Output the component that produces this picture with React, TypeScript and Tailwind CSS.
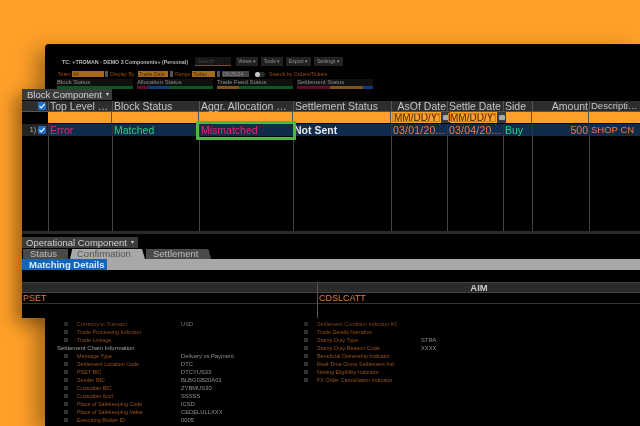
const font = { fontFamily: '"Liberation Sans", Arial, sans-serif' };

type Col = { w: string; label: string; right?: boolean };
const cols: Col[] = [
  { w: "w-[64px]", label: "Top Level …" },
  { w: "w-[87px]", label: "Block Status" },
  { w: "w-[94px]", label: "Aggr. Allocation …" },
  { w: "w-[98px]", label: "Settlement Status" },
  { w: "w-[56px]", label: "AsOf Date", right: true },
  { w: "w-[56px]", label: "Settle Date" },
  { w: "w-[29px]", label: "Side" },
  { w: "w-[57px]", label: "Amount", right: true },
  { w: "flex-1 text-[9.5px]", label: "Descripti…" },
];

function Check() {
  return (
    <span className="flex h-[8px] w-[8px] shrink-0 items-center justify-center rounded-[1px] bg-[#1a6fd0]">
      <svg viewBox="0 0 8 8" className="h-[8px] w-[8px]">
        <path d="M1.5 4 L3.3 5.8 L6.6 2" stroke="#e8f2ff" strokeWidth="1.2" fill="none" />
      </svg>
    </span>
  );
}

function DateInput() {
  return (
    <div className="flex h-full flex-1 items-stretch">
      <div className="m-[1px] flex-1 overflow-hidden whitespace-nowrap border border-[#c9801f] pl-[1px] text-[10px] leading-[8px] text-[#3f2003]">MM/DD/Y'</div>
      <div className="flex w-[9px] shrink-0 items-center justify-center bg-[#3a3a3a]">
        <span className="h-[5px] w-[6px] rounded-[1px] bg-[#a9a9a9]" />
      </div>
    </div>
  );
}

function Detail({ label, value }: { label: string; value?: string }) {
  return (
    <div className="flex h-[8px] items-center pl-[19px] leading-[8px]">
      <span className="h-[4px] w-[4px] shrink-0 bg-[#333]" />
      <span className="ml-[9px] w-[104px] shrink-0 whitespace-nowrap text-[5.4px] text-[#9a5018]">{label}</span>
      <span className="whitespace-nowrap text-[5.8px] text-[#909090]">{value}</span>
    </div>
  );
}

function Status({ label, bars }: { label: string; bars: string[] }) {
  return (
    <div className="w-[76px] shrink-0">
      <div className="h-[7px] whitespace-nowrap bg-[#111] leading-[7px] text-[#8f8f8f]">{label}</div>
      <div className="flex h-[3px]">
        {bars.map((b) => (
          <div key={b} className={b} />
        ))}
      </div>
    </div>
  );
}

function Menu({ label, w }: { label: string; w: string }) {
  return (
    <span className={`flex h-[9px] items-center justify-center whitespace-nowrap bg-[#222] leading-[9px] text-[#8e8e8e] ${w}`}>{label} ▾</span>
  );
}

export default function App() {
  return (
    <div className="relative h-[426px] w-[640px] overflow-hidden bg-[#ffa028] blur-[0.45px]" style={font}>
      {/* background window */}
      <div className="absolute left-[45px] top-[44px] flex h-[382px] w-[595px] flex-col rounded-tl-[4px] bg-black text-[6px] shadow-[-10px_6px_20px_rgba(0,0,0,0.32)]">
        <div className="flex h-[22px] shrink-0 items-end pl-[17px]">
          <span className="w-[128px] shrink-0 whitespace-nowrap text-[5.3px] font-bold leading-[8px] text-[#b8b8b8]">TC: +TROMAN - DEMO 3 Components+ (Personal)</span>
          <span className="ml-[5px] h-[9px] w-[36px] border-b border-[#8a4a14] bg-[#161616] pl-[3px] text-[5.2px] leading-[8px] text-[#444]">Search</span>
          <div className="ml-[5px] flex gap-[3px] text-[5.2px]">
            <Menu label="Views" w="w-[22px]" />
            <Menu label="Tools" w="w-[22px]" />
            <Menu label="Export" w="w-[25px]" />
            <Menu label="Settings" w="w-[29px]" />
          </div>
        </div>
        <div className="mt-[4px] flex h-[8px] shrink-0 items-center pl-[13px] text-[5.2px] leading-[8px] text-[#9a4a12]">
          <span className="w-[14px]">Team</span>
          <span className="h-[6px] w-[32px] bg-[#a66a1c] pl-[1px] leading-[6px] text-[#4a2a05]">All</span>
          <span className="ml-[1px] h-[6px] w-[3px] bg-[#555]" />
          <span className="ml-[2px] w-[28px] whitespace-nowrap">Display By</span>
          <span className="h-[6px] w-[30px] whitespace-nowrap bg-[#a66a1c] pl-[1px] leading-[6px] text-[#4a2a05]">Trade Date</span>
          <span className="ml-[2px] h-[6px] w-[3px] bg-[#555]" />
          <span className="ml-[2px] w-[17px]">Range</span>
          <span className="h-[6px] w-[23px] bg-[#a66a1c] pl-[1px] leading-[6px] text-[#4a2a05]">Today</span>
          <span className="ml-[2px] h-[6px] w-[3px] bg-[#555]" />
          <span className="ml-[2px] h-[6px] w-[27px] bg-[#444] pl-[1px] leading-[6px] text-[#999]">06/25/24</span>
          <span className="ml-[6px] h-[5px] w-[10px] rounded-full bg-[#2b2b2b]">
            <span className="block h-[5px] w-[5px] rounded-full bg-[#c8c8c8]" />
          </span>
          <span className="ml-[4px] whitespace-nowrap">Search by Orders/Tickets</span>
        </div>
        <div className="mt-[1px] flex shrink-0 gap-[4px] pl-[12px]">
          <Status label="Block Status" bars={["h-full w-full bg-[#0e5c22]"]} />
          <Status label="Allocation Status" bars={["h-full w-[11px] bg-[#6a0f2a]", "h-full w-[21px] bg-[#0d3f8a]", "h-full flex-1 bg-[#0e5c22]"]} />
          <Status label="Trade Feed Status" bars={["h-full w-[22px] bg-[#8a5a1c]", "h-full flex-1 bg-[#0e5c22]"]} />
          <Status label="Settlement Status" bars={["h-full w-[33px] bg-[#6a0f2a]", "h-full w-[33px] bg-[#8a5a1c]", "h-full flex-1 bg-[#0d3f8a]"]} />
        </div>

        {/* details visible beneath the foreground panel */}
        <div className="mt-[231px] grid grid-cols-[240px_1fr]">
          <div>
            <Detail label="Currency to Transact" value="USD" />
            <Detail label="Trade Processing Indicator" />
            <Detail label="Trade Linkage" />
            <div className="h-[8px] whitespace-nowrap pl-[12px] leading-[8px] text-[#a0a0a0]">Settlement Chain Information</div>
            <Detail label="Message Type" value="Delivery vs Payment" />
            <Detail label="Settlement Location Code" value="DTC" />
            <Detail label="PSET BIC" value="DTCYUS33" />
            <Detail label="Sender BIC" value="BLBGGB20A01" />
            <Detail label="Custodian BIC" value="ZYBMUS30" />
            <Detail label="Custodian Acct" value="SSSSS" />
            <Detail label="Place of Safekeeping Code" value="ICSD" />
            <Detail label="Place of Safekeeping Value" value="CEDELULLXXX" />
            <Detail label="Executing Broker ID" value="0005" />
          </div>
          <div>
            <Detail label="Settlement Condition Indicator #3" />
            <Detail label="Trade Details Narrative" />
            <Detail label="Stamp Duty Type" value="STRA" />
            <Detail label="Stamp Duty Reason Code" value="XXXX" />
            <Detail label="Beneficial Ownership Indicator" />
            <Detail label="Real-Time Gross Settlement Ind." />
            <Detail label="Netting Eligibility Indicator" />
            <Detail label="FX Order Cancellation Indicator" />
          </div>
        </div>
      </div>

      {/* foreground window */}
      <div className="absolute left-[22px] top-[89px] flex h-[229px] w-[618px] flex-col bg-black text-[10.5px] shadow-[-8px_6px_16px_rgba(0,0,0,0.35)]">
        <div className="flex h-[11px] shrink-0">
          <span className="flex w-[90px] items-center gap-[4px] whitespace-nowrap bg-[#3c3c3c] pl-[5px] text-[9.5px] leading-[11px] text-[#d0d0d0]">
            Block Component <span className="text-[6px]">▾</span>
          </span>
        </div>
        <div className="mt-[1px] flex h-[11px] shrink-0 border-b border-[#555] bg-[#2d2d2d] leading-[10px] text-[#c4c4c4]">
          <div className="flex w-[26px] shrink-0 items-center justify-end pr-[2px]"><Check /></div>
          {cols.map((c) => (
            <div key={c.label} className={`${c.w} shrink-0 whitespace-nowrap border-l border-[#555] px-[1px] ${c.right ? "text-right" : ""}`}>
              {c.label}
            </div>
          ))}
        </div>
        <div className="flex h-[11px] shrink-0 bg-black">
          <div className="w-[26px] shrink-0" />
          <div className="flex flex-1 bg-[#ffa028]">
            <div className="w-[64px] border-r border-[#555]" />
            <div className="w-[87px] border-r border-[#555]" />
            <div className="w-[94px] border-r border-[#555]" />
            <div className="w-[98px] border-r border-[#555]" />
            <div className="flex w-[56px] border-r border-[#555]"><DateInput /></div>
            <div className="flex w-[56px] border-r border-[#555]"><DateInput /></div>
            <div className="w-[29px] border-r border-[#555]" />
            <div className="w-[57px] border-r border-[#555]" />
            <div className="flex-1" />
          </div>
        </div>
        <div className="mt-[1px] flex h-[12px] shrink-0 bg-[#0f2c4c] leading-[12px]">
          <div className="flex w-[26px] shrink-0 items-center justify-end gap-[2px] bg-[#242424] pr-[2px] text-[7px] text-[#b8b8b8]">1)<Check /></div>
          <div className="w-[64px] shrink-0 whitespace-nowrap border-l border-[#333] px-[1px] text-[#f0256a]">Error</div>
          <div className="w-[87px] shrink-0 whitespace-nowrap border-l border-[#333] px-[1px] text-[#25d07a]">Matched</div>
          <div className="relative w-[94px] shrink-0 whitespace-nowrap border-l border-[#333] px-[1px] text-[#f0256a]">
            Mismatched
            <span className="absolute -bottom-[4px] -left-[4px] -right-[3px] -top-[3px] rounded-[1px] border-[3px] border-[#4db848]" />
          </div>
          <div className="w-[98px] shrink-0 whitespace-nowrap border-l border-[#333] font-bold text-[#e8e8e8]">Not Sent</div>
          <div className="w-[56px] shrink-0 overflow-hidden whitespace-nowrap border-l border-[#333] px-[1px] tracking-[0.2px] text-[#f07a45]">03/01/20...</div>
          <div className="w-[56px] shrink-0 overflow-hidden whitespace-nowrap border-l border-[#333] px-[1px] tracking-[0.2px] text-[#f07a45]">03/04/20...</div>
          <div className="w-[29px] shrink-0 whitespace-nowrap border-l border-[#333] px-[1px] text-[#25d07a]">Buy</div>
          <div className="flex w-[57px] shrink-0 items-center justify-end whitespace-nowrap border-l border-[#333] px-[1px] text-[10.5px] text-[#f07a45]">500</div>
          <div className="flex flex-1 items-center whitespace-nowrap border-l border-[#333] px-[1px] text-[9.5px] text-[#f07a45]">SHOP CN</div>
        </div>
        <div className="flex h-[98px] shrink-0 border-b-[3px] border-[#2a2a2a]">
          <div className="w-[26px] shrink-0" />
          {cols.map((c) => (
            <div key={c.label} className={`${c.w} shrink-0 border-l border-[#444]`} />
          ))}
        </div>
        <div className="mt-[3px] flex h-[11px] shrink-0">
          <span className="flex w-[116px] items-center gap-[4px] whitespace-nowrap bg-[#3c3c3c] pl-[4px] text-[9.5px] leading-[11px] text-[#d0d0d0]">
            Operational Component <span className="text-[6px]">▾</span>
          </span>
        </div>
        <div className="flex h-[11px] shrink-0 items-end pl-[1px] text-[9.5px] leading-[10px]">
          <span className="flex h-[10px] w-[45px] items-center bg-[#4a4a4a] pl-[7px] text-[#bdbdbd]">Status</span>
          <span className="ml-[2px] flex h-[10px] w-[75px] items-center whitespace-nowrap bg-[#a8a8a8] pl-[7px] text-[#555] [clip-path:polygon(3%_0,96%_0,100%_100%,0_100%)]">Confirmation</span>
          <span className="ml-[1px] flex h-[10px] w-[65px] items-center bg-[#4a4a4a] pl-[7px] text-[#bdbdbd] [clip-path:polygon(0_0,96%_0,100%_100%,0_100%)]">Settlement</span>
        </div>
        <div className="flex h-[11px] shrink-0 bg-[#a8a8a8]">
          <span className="flex w-[85px] items-center whitespace-nowrap bg-[#1465b8] pl-[7px] text-[9.5px] font-bold leading-[11px] text-[#d8e8fa]">Matching Details</span>
        </div>
        <div className="h-[12px] shrink-0" />
        <div className="grid h-[11px] shrink-0 grid-cols-[295px_1fr] border-y border-[#444] bg-[#2a2a2a] text-[9.5px] font-bold leading-[9px] text-[#c8c8c8]">
          <div />
          <div className="border-l border-[#555] text-center">AIM</div>
        </div>
        <div className="grid flex-1 grid-cols-[295px_1fr] text-[9px] text-[#f07a35]">
          <div className="h-[11px] border-b border-[#333] pl-[1px] leading-[10px]">PSET</div>
          <div className="border-l border-[#555]">
            <div className="h-[11px] border-b border-[#333] pl-[1px] leading-[10px]">CDSLCATT</div>
          </div>
        </div>
      </div>
    </div>
  );
}
